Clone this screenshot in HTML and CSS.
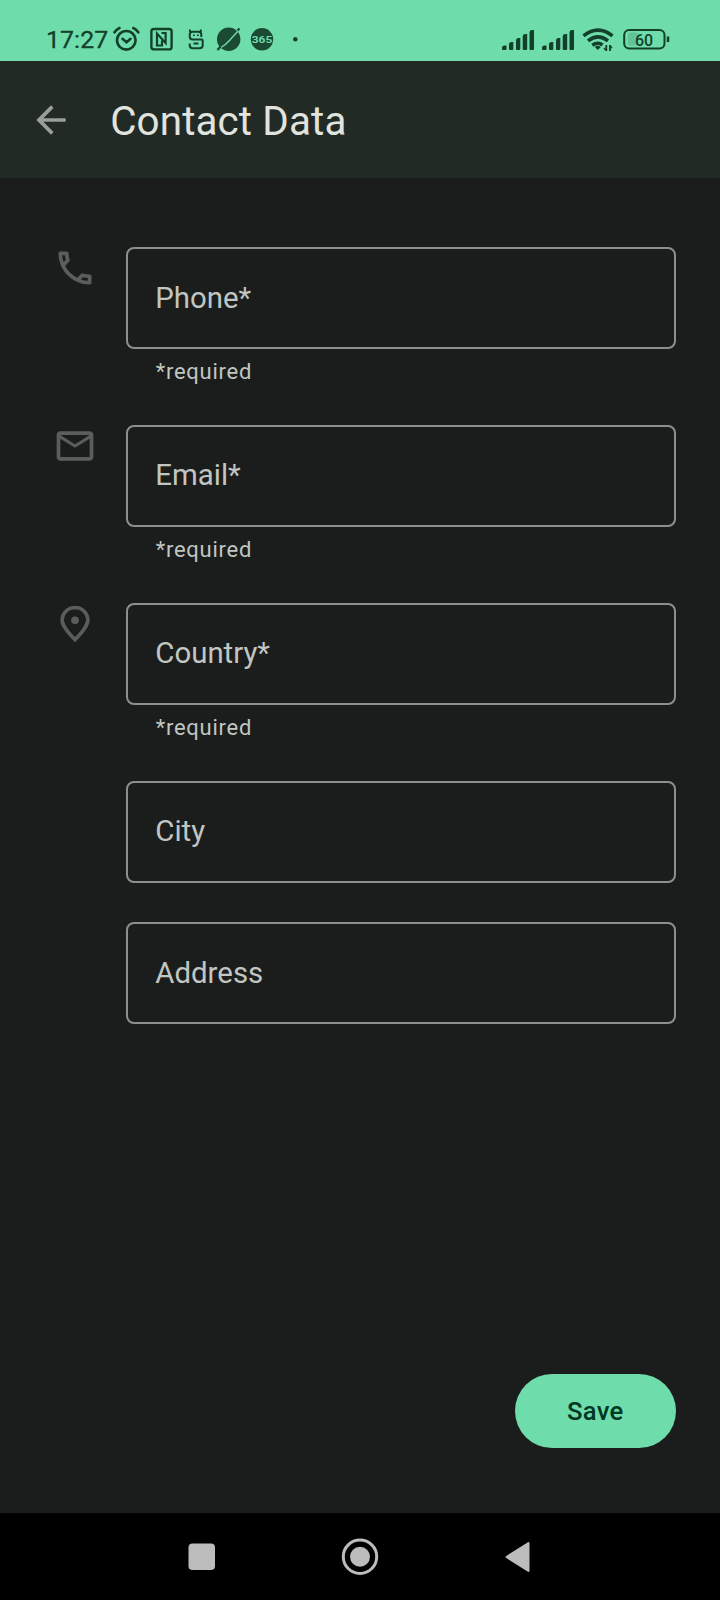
FILE: index.html
```html
<!DOCTYPE html>
<html lang="en">
<head>
<meta charset="utf-8">
<title>Contact Data</title>
<link rel="stylesheet" href="styles.css">
</head>
<body>
<div class="screen">
  <div class="status">
    <span class="clock">17:27</span>
    <svg class="notifications" width="190" height="32" viewBox="112 24 190 32" fill="none">
      <g stroke="#12402a" stroke-width="2.6" stroke-linecap="round">
        <circle cx="126.300" cy="40.300" r="9.300"/>
        <path d="M122.500 38.800l4 3.400 4-3.400M114.500 32.300q2-3 5-4.300M138.300 32.300q-2-3-5-4.300"/>
      </g>
      <rect x="151.400" y="29" width="20.200" height="20.400" rx="2.500" stroke="#12402a" stroke-width="2.400"/>
      <path d="M157 46.500V33.500l8.600 9.500V32M161.500 33h4.500M157 45.500h5v-5" stroke="#12402a" stroke-width="2.200"/>
      <path d="M201.300 37v-2.300q0-3-3-3h-5.600q-3 0-3 3v1.800q0 3 3 3h9q1 0 1 1v4.800q0 3-3 3h-7q-3 0-3-3v-1.800M193.500 43.500h5M190 32v-2.500M200.800 32v-2.500" stroke="#12402a" stroke-width="2"/>
      <path d="M193 35.300h1.700M197 35.300h1.700" stroke="#12402a" stroke-width="1.500"/>
      <circle cx="228.700" cy="39.300" r="11.700" fill="#1b4a33"/>
      <path d="M221 47.500q5-3 8.500-7t8-9" stroke="#6fdcab" stroke-width="1.400"/>
      <path d="M217.500 50l3-3.500M237.500 30.500l2-2" stroke="#1b4a33" stroke-width="2.400"/>
      <circle cx="262" cy="39.300" r="11.200" fill="#1b4a33"/>
      <text class="badge-text" x="262" y="42.900" text-anchor="middle" textLength="20.500" lengthAdjust="spacingAndGlyphs">365</text>
      <circle cx="295.300" cy="39.300" r="2.200" fill="#12402a"/>
    </svg>
    <svg class="system" width="172" height="32" viewBox="500 24 172 32" fill="none">
      <g fill="#12402a">
        <path id="bars" d="M502 49v-1q0-2.500 2.500-2.500h2V49q0 1-1 1h-2.500q-1 0-1-1zM509 49v-4.500q0-2.500 2.500-2.500h1.800v7q0 1-1 1H510q-1 0-1-1zM516 49v-8.500q0-2.500 2.500-2.500h1.800v11q0 1-1 1H517q-1 0-1-1zM522.700 49V36.500q0-2.500 2.500-2.500h2v15q0 1-1 1h-2.500q-1 0-1-1zM529.500 49V32.500q0-2.500 2.500-2.500h2v19q0 1-1 1h-2.500q-1 0-1-1z"/>
        <use href="#bars" x="40"/>
      </g>
      <g stroke="#12402a" stroke-width="3.600">
        <path d="M583.500 35.800q14.500-11.500 29 0M588 40.800q10-8 20 0M592.300 45.300q5.600-4 10.200-.300"/>
        <path d="M594.800 47q3-2.500 6 0l-3 3z" fill="#12402a" stroke="none"/>
        <path d="M606.300 45v6M610 45v6" stroke-width="1.800"/>
        <path d="M604 48l2.300 2.500M609.700 45.500l2.300 2.500" stroke-width="1.500"/>
      </g>
      <rect x="628" y="32.500" width="10" height="13" rx="2" fill="#60c496"/>
      <rect x="624.200" y="29.900" width="40.300" height="18.600" rx="5" stroke="#12402a" stroke-width="2"/>
      <path d="M668 36.500v5.500" stroke="#12402a" stroke-width="2.500"/>
      <text class="battery-text" x="644" y="45.500" text-anchor="middle">60</text>
    </svg>
  </div>

  <header class="appbar">
    <svg class="back" viewBox="0 0 24 24"><path d="M20 11H7.830l5.590-5.590L12 4l-8 8 8 8 1.410-1.410L7.830 13H20v-2z"/></svg>
    <h1 class="title">Contact Data</h1>
  </header>

  <main class="form">
    <div class="row">
      <svg class="icon" viewBox="0 0 24 24"><path d="M6.540 5c.060.890.210 1.760.450 2.590l-1.200 1.200c-.410-1.200-.670-2.470-.760-3.790h1.510m9.860 12.020c.850.240 1.720.390 2.600.450v1.490c-1.320-.090-2.590-.350-3.800-.750l1.200-1.190M7.500 3H4c-.550 0-1 .450-1 1 0 9.390 7.610 17 17 17 .550 0 1-.450 1-1v-3.490c0-.550-.450-1-1-1-1.240 0-2.450-.200-3.570-.570-.100-.040-.210-.050-.310-.050-.260 0-.510.100-.710.290l-2.200 2.200c-2.830-1.450-5.150-3.760-6.590-6.590l2.200-2.200c.280-.280.360-.670.250-1.020C8.700 6.450 8.500 5.250 8.500 4c0-.550-.450-1-1-1z"/></svg>
      <div class="field"><div class="box">Phone*</div><div class="help">*required</div></div>
    </div>
    <div class="row">
      <svg class="icon" viewBox="0 0 24 24"><path d="M22 6c0-1.100-.900-2-2-2H4c-1.100 0-2 .900-2 2v12c0 1.100.900 2 2 2h16c1.100 0 2-.900 2-2V6zm-2 0l-8 5-8-5h16zm0 12H4V8l8 5 8-5v10z"/></svg>
      <div class="field"><div class="box">Email*</div><div class="help">*required</div></div>
    </div>
    <div class="row">
      <svg class="icon" viewBox="0 0 24 24"><path d="M12 3c-3.870 0-7 3.130-7 7 0 .300.100 3.700 7 10.500C18.900 13.700 19 10.300 19 10c0-3.870-3.130-7-7-7z" fill="none" stroke="#5a5e5b" stroke-width="2"/><circle cx="12" cy="10" r="2.100"/></svg>
      <div class="field"><div class="box">Country*</div><div class="help">*required</div></div>
    </div>
    <div class="row">
      <span class="icon"></span>
      <div class="field"><div class="box">City</div></div>
    </div>
    <div class="row">
      <span class="icon"></span>
      <div class="field"><div class="box">Address</div></div>
    </div>
  </main>

  <footer class="actions"><button class="save">Save</button></footer>

  <nav class="navbar">
    <svg width="28" height="28" viewBox="0 0 28 28"><rect x=".500" y=".500" width="26.500" height="26.500" rx="4"/></svg>
    <svg width="38" height="38" viewBox="0 0 38 38"><circle cx="19" cy="18.700" r="16.700" fill="none" stroke="#bcbcbc" stroke-width="3"/><circle cx="19" cy="18.700" r="10"/></svg>
    <svg width="26" height="32" viewBox="0 0 26 32"><path d="M2.500 16L24.500 2v28z" stroke="#bcbcbc" stroke-width="2" stroke-linejoin="round"/></svg>
  </nav>
</div>
</body>
</html>
```

FILE: styles.css
```css
* { box-sizing: border-box; }
body { margin: 0; background: #1b1d1c; font-family: Roboto, sans-serif; }
.screen { width: 720px; height: 1600px; display: flex; flex-direction: column; background: #1b1d1c; }

.status { height: 61px; flex: none; display: flex; align-items: flex-start; background: #6fdcab; padding: 24px 48px 0 46px; color: #12402a; }
.clock { width: 66px; font-size: 24.800px; line-height: 32px; letter-spacing: .1px; white-space: nowrap; -webkit-text-stroke: .3px #12402a; }
.system { margin-left: auto; }
.badge-text { font: 700 9.800px Roboto, sans-serif; fill: #6fdcab; }
.battery-text { font: 500 16px Roboto, sans-serif; fill: #12402a; }

.appbar { height: 117px; flex: none; display: flex; align-items: center; background: #222a26; padding: 0 30px 0 29px; }
.back { width: 44px; height: 44px; fill: #9a9f9b; }
.title { margin: 5px 0 0 37.200px; font-size: 40.400px; line-height: 48px; font-weight: 400; color: #e1e3df; letter-spacing: .12px; }

.form { flex: 1; display: flex; flex-direction: column; gap: 39.300px; padding: 69px 44px 0 52.500px; }
.row { display: flex; align-items: flex-start; gap: 29.500px; }
.icon { width: 44px; height: 44px; margin-top: -1px; flex: none; fill: #5a5e5b; }
.field { flex: 1; }
.box { height: 102px; display: flex; align-items: center; border: 2px solid #8a918d; border-radius: 8px; padding: 0 27.300px 1px; font-size: 29.400px; color: #c1c6c2; letter-spacing: 0; }
.help { height: 36.700px; padding: 9px 29.700px 0; font-size: 22px; line-height: 28px; color: #c1c6c2; letter-spacing: .75px; }

.actions { flex: none; display: flex; justify-content: flex-end; padding: 0 44px 65.500px; }
.save { width: 161.500px; height: 73.500px; border: 0; border-radius: 37px; background: #6fdcab; color: #003823; font: 500 25.700px Roboto, sans-serif; letter-spacing: .2px; padding: 0; }

.navbar { height: 87px; flex: none; display: flex; align-items: center; justify-content: space-between; background: #000; padding: 0 190px 0 188px; fill: #bcbcbc; }
```
